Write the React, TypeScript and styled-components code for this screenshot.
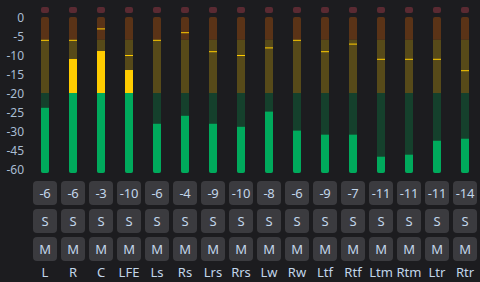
import React from "react";
import styled, { createGlobalStyle } from "styled-components";

const GlobalStyle = createGlobalStyle`
  html, body {
    margin: 0;
    padding: 0;
    background: #1c1c1f;
  }
  body {
    font-family: "Noto Sans", "DejaVu Sans", sans-serif;
    color: #b4c8de;
  }
`;

type Channel = { name: string; level: number; peak: number };

const channels: Channel[] = [
  { name: "L", level: -23.9, peak: -6 },
  { name: "R", level: -11.05, peak: -6 },
  { name: "C", level: -8.95, peak: -3 },
  { name: "LFE", level: -13.95, peak: -10 },
  { name: "Ls", level: -28.1, peak: -6 },
  { name: "Rs", level: -26, peak: -4 },
  { name: "Lrs", level: -28.1, peak: -9 },
  { name: "Rrs", level: -28.9, peak: -10 },
  { name: "Lw", level: -24.9, peak: -8 },
  { name: "Rw", level: -29.9, peak: -6 },
  { name: "Ltf", level: -32.9, peak: -9 },
  { name: "Rtf", level: -32.9, peak: -7 },
  { name: "Ltm", level: -50.3, peak: -11 },
  { name: "Rtm", level: -48.7, peak: -11 },
  { name: "Ltr", level: -37.7, peak: -11 },
  { name: "Rtr", level: -36.1, peak: -14 },
];

const scaleMarks = ["0", "-5", "-10", "-15", "-20", "-25", "-30", "-45", "-60"];

const METER_W = 8;
const METER_H = 156;

// dB -> pixel offset from the top of the meter
const dbToY = (db: number): number => {
  if (db >= -30) return -db * 3.8;
  if (db >= -45) return 114 + ((-30 - db) / 15) * 19;
  if (db >= -60) return 133 + ((-45 - db) / 15) * 19;
  return METER_H;
};

const ZONE_WARN = dbToY(-6); // brown/olive boundary
const ZONE_SAFE = dbToY(-20); // olive/green boundary

const colors = {
  hotBg: "#5a3317",
  warnBg: "#574a19",
  safeBg: "#15402c",
  hot: "#e0501a",
  warn: "#ffcc00",
  safe: "#00aa5c",
  peak: "#ffcc00",
};

const Panel = styled.div`
  display: flex;
  align-items: flex-start;
  padding-top: 7px;
  height: 282px;
  box-sizing: border-box;
`;

const Scale = styled.div`
  display: flex;
  flex-direction: column;
  width: 24px;
  margin-right: 9px;
  padding-top: 0.5px;
  text-align: right;
`;

const ScaleMark = styled.div`
  height: 19px;
  line-height: 19px;
  font-size: 12px;
  color: #a9bdd3;
`;

const Strips = styled.div`
  display: flex;
  gap: 4px;
`;

const Strip = styled.div`
  display: flex;
  flex-direction: column;
  align-items: center;
  width: 24px;
`;

const ClipLed = styled.div`
  width: 8px;
  height: 6px;
  border-radius: 2px;
  background: #5a2a32;
  margin-bottom: 4px;
`;

const MeterSvg = styled.svg`
  display: block;
  width: ${METER_W}px;
  height: ${METER_H}px;
`;

const Buttons = styled.div`
  display: flex;
  flex-direction: column;
  gap: 4px;
  margin-top: 8px;
`;

const StripButton = styled.button<{ $active?: boolean }>`
  width: 24px;
  height: 24px;
  padding: 0;
  border: none;
  border-radius: 4px;
  background: ${(p) => (p.$active ? "#5a5a60" : "#3b3b3f")};
  color: #c2d6ea;
  font-family: "Noto Sans", "DejaVu Sans", sans-serif;
  font-size: 13px;
  line-height: 24px;
  text-align: center;
  white-space: nowrap;
  letter-spacing: -0.2px;
  cursor: pointer;
`;

const ChannelName = styled.div`
  margin-top: 2px;
  height: 18px;
  line-height: 18px;
  font-size: 13px;
  color: #c2d6ea;
  white-space: nowrap;
  text-align: center;
`;

const Meter: React.FC<{ level: number; peak: number; id: string }> = ({
  level,
  peak,
  id,
}) => {
  const top = dbToY(level);
  const peakY = dbToY(peak);
  const safeTop = Math.max(top, ZONE_SAFE);
  const warnTop = Math.max(top, ZONE_WARN);
  return (
    <MeterSvg viewBox={`0 0 ${METER_W} ${METER_H}`}>
      <defs>
        <clipPath id={id}>
          <rect x="0" y="0" width={METER_W} height={METER_H} rx="2" ry="2" />
        </clipPath>
      </defs>
      <g clipPath={`url(#${id})`}>
        <rect x="0" y="0" width={METER_W} height={ZONE_WARN} fill={colors.hotBg} />
        <rect
          x="0"
          y={ZONE_WARN}
          width={METER_W}
          height={ZONE_SAFE - ZONE_WARN}
          fill={colors.warnBg}
        />
        <rect
          x="0"
          y={ZONE_SAFE}
          width={METER_W}
          height={METER_H - ZONE_SAFE}
          fill={colors.safeBg}
        />
        {top < ZONE_WARN && (
          <rect x="0" y={top} width={METER_W} height={ZONE_WARN - top} fill={colors.hot} />
        )}
        {top < ZONE_SAFE && (
          <rect
            x="0"
            y={warnTop}
            width={METER_W}
            height={ZONE_SAFE - warnTop}
            fill={colors.warn}
          />
        )}
        <rect
          x="0"
          y={safeTop}
          width={METER_W}
          height={METER_H - safeTop}
          fill={colors.safe}
        />
        <rect x="0" y={peakY} width={METER_W} height="1" fill={colors.peak} />
      </g>
    </MeterSvg>
  );
};

export default function App() {
  return (
    <>
      <GlobalStyle />
      <Panel>
        <Scale>
          {scaleMarks.map((m) => (
            <ScaleMark key={m}>{m}</ScaleMark>
          ))}
        </Scale>
        <Strips>
          {channels.map((ch, i) => (
            <Strip key={ch.name}>
              <ClipLed />
              <Meter level={ch.level} peak={ch.peak} id={`meter-clip-${i}`} />
              <Buttons>
                <StripButton>{ch.peak}</StripButton>
                <StripButton>S</StripButton>
                <StripButton>M</StripButton>
              </Buttons>
              <ChannelName>{ch.name}</ChannelName>
            </Strip>
          ))}
        </Strips>
      </Panel>
    </>
  );
}
